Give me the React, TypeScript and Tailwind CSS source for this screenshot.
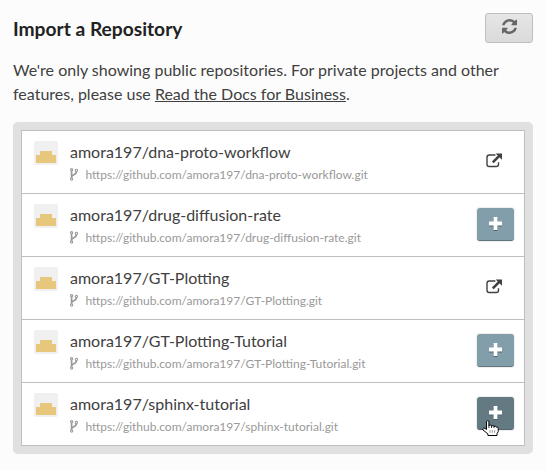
type Action = "open" | "add" | "hover";

const repos: { name: string; action: Action }[] = [
  { name: "dna-proto-workflow", action: "open" },
  { name: "drug-diffusion-rate", action: "add" },
  { name: "GT-Plotting", action: "open" },
  { name: "GT-Plotting-Tutorial", action: "add" },
  { name: "sphinx-tutorial", action: "hover" },
];

function RefreshIcon() {
  return (
    <svg className="h-[15px] w-[15px] text-[#666]" viewBox="0 128 1536 1536" preserveAspectRatio="none" fill="currentColor">
      <path d="M1511 1056q0 5-1 7-64 268-268 434.5t-478 166.5q-146 0-282.5-55t-243.5-157l-129 129q-19 19-45 19t-45-19-19-45v-448q0-26 19-45t45-19h448q26 0 45 19t19 45-19 45l-137 137q71 66 161 102t187 36q134 0 250-65t186-179q11-17 53-117 8-23 30-23h192q13 0 22.5 9.5t9.5 22.5zM1536 256v448q0 26-19 45t-45 19h-448q-26 0-45-19t-19-45 19-45l138-138q-148-137-349-137-134 0-250 65t-186 179q-11 17-53 117-8 23-30 23h-199q-13 0-22.5-9.5t-9.5-22.5v-7q65-268 270-434.5t480-166.5q146 0 284 55.5t245 156.5l130-129q19-19 45-19t45 19 19 45z" />
    </svg>
  );
}

function Avatar() {
  return (
    <svg className="mt-[10px] size-6 shrink-0 rounded-[2px]" viewBox="0 0 24 24" shapeRendering="crispEdges">
      <path d="M0 0h24v24H0z" fill="#f0f0f0" />
      <path d="M6 10h12v4h4v8H2v-8h4z" fill="#e6c77c" />
    </svg>
  );
}

function ForkIcon() {
  return (
    <svg className="mb-[1px] h-[13px] w-2 shrink-0" viewBox="0 0 8 13" fill="none" stroke="#999" strokeWidth="1.1">
      <circle cx="1.6" cy="1.7" r="1.1" />
      <circle cx="6.4" cy="2.4" r="1.1" />
      <circle cx="1.6" cy="11.1" r="1.1" />
      <path d="M1.6 2.7V10M6.4 3.5c0 4-4.3 2.6-4.8 5.3" strokeWidth="1.7" />
    </svg>
  );
}

function ExternalIcon() {
  return (
    <svg className="mr-[11px] h-[15px] w-[17px]" viewBox="0 0 17 15" fill="none">
      <path d="M9.4 2H3.2Q1 2 1 4.2v7.1q0 2.2 2.2 2.2h7.1q2.2 0 2.2-2.2V9.2" stroke="#404040" strokeWidth="1.4" />
      <path d="M6.8 9.3L13 3.1" stroke="#404040" strokeWidth="2.6" />
      <path d="M9.6.4H16v6.4z" fill="#404040" />
    </svg>
  );
}

function PlusIcon() {
  return (
    <svg className="size-[13px] drop-shadow-[0_1px_0_#52636b]" viewBox="0 0 13 13">
      <path d="M4.6 0h3.8v4.6H13v3.8H8.4V13H4.6V8.4H0V4.6h4.6z" fill="#fff" />
    </svg>
  );
}

function HandCursor() {
  return (
    <svg className="absolute top-[23px] left-[5px] h-4 w-[17px]" viewBox="0 0 17 16">
      <path
        d="M4.5 9.5V1.8Q4.5.6 5.7.6T6.9 1.8v3.6q2.2-.8 2.6.4 1.9-.5 2.5.5 1.8-.4 2.3.7 1.9 0 1.9 1.4v3.2L15 13.6v1.9H5.9v-1.6L1 10Q.3 8.5 1.5 8.1q1.4-.2 3 1.4z"
        fill="#fff"
        stroke="#000"
      />
      <path d="M6.9 5v3M9.5 5.6V8M12 6.2V8" stroke="#000" strokeWidth=".8" />
      <path d="M8 10.2v2.5M10.3 10.2v2.5M12.6 10.2v2.5" stroke="#666" strokeWidth=".7" />
    </svg>
  );
}

export default function App() {
  return (
    <main className="h-[470px] w-[546px] bg-[#fcfcfc] px-[13px] pt-[13px] font-['Lato',sans-serif] text-[#404040]">
      <header className="flex h-[30px] justify-between">
        <h1 className="pt-1 text-[19.2px] leading-6 font-bold text-[#222]">Import a Repository</h1>
        <button className="flex h-[30px] w-12 justify-center rounded-[3px] border border-[#bfbfbf] bg-linear-to-b from-[#e6e6e6] to-[#dadada] pt-[5px]">
          <RefreshIcon />
        </button>
      </header>
      <p className="mt-[15px] h-16 text-base leading-6 whitespace-nowrap">
        We're only showing public repositories. For private projects and other
        <br />
        features, please use <a className="underline">Read the Docs for Business</a>.
      </p>
      <section className="w-[520px] rounded-[5px] bg-[#e0e0e0] p-2">
        <ul className="border border-[#bfbfbf] bg-white">
          {repos.map((repo) => (
            <li key={repo.name} className="flex h-[63px] border-b border-[#bfbfbf] pr-[10px] pl-3 last:h-[62px] last:border-b-0">
              <Avatar />
              <div className="ml-3 flex-1 pt-[9px]">
                <div className="text-base leading-6">amora197/{repo.name}</div>
                <div className="mt-[2px] flex h-[18px] items-center gap-[7.5px] text-xs leading-[18px] text-[#999]">
                  <ForkIcon />
                  <span>https://github.com/amora197/{repo.name}.git</span>
                </div>
              </div>
              {repo.action === "open" ? (
                <a className="pt-[22px]">
                  <ExternalIcon />
                </a>
              ) : (
                <button
                  className={`relative mt-[14px] flex h-[33px] w-[37px] justify-center rounded-[3px] border-b pt-[9px] shadow-[0_0_1px_1px_#eeeeee] ${
                    repo.action === "hover" ? "border-[#52676f] bg-[#647a82]" : "border-[#60747d] bg-[#829eab]"
                  }`}
                >
                  <PlusIcon />
                  {repo.action === "hover" && <HandCursor />}
                </button>
              )}
            </li>
          ))}
        </ul>
      </section>
    </main>
  );
}
